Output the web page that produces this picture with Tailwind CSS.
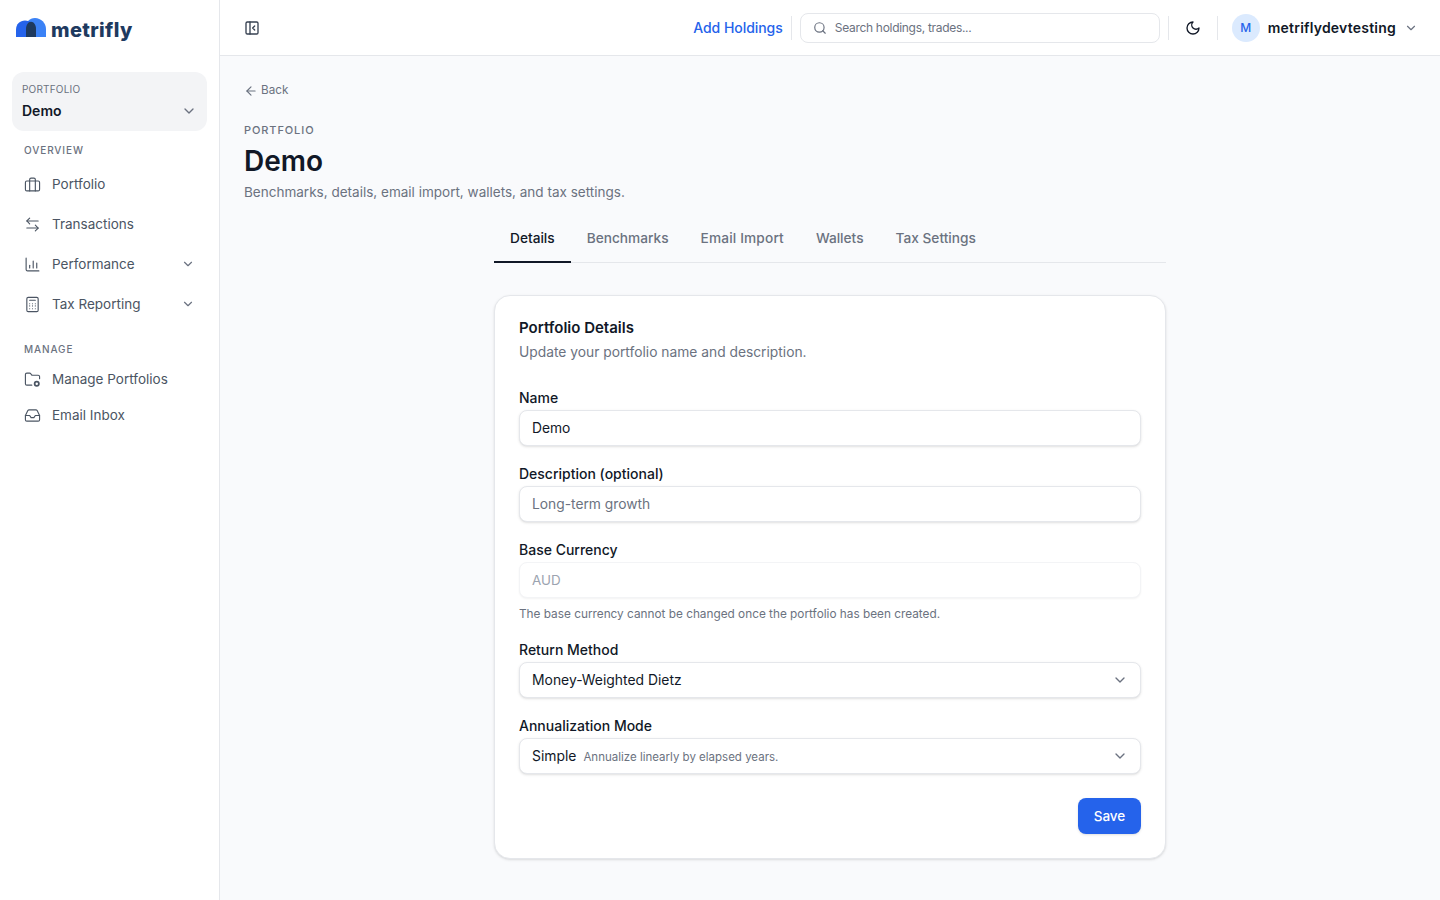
<!DOCTYPE html>
<html lang="en">
  <head>
    <meta charset="UTF-8" />
    <meta name="viewport" content="width=device-width, initial-scale=1.0" />
    <title>Demo - Portfolio</title>
    <script src="https://cdn.jsdelivr.net/npm/@tailwindcss/browser@4"></script>
  </head>
  <body class="bg-white font-['Inter',sans-serif] text-[#111827] overflow-hidden">
    <div class="flex h-[900px] w-[1440px]">
      <!-- Sidebar -->
      <aside class="w-[220px] shrink-0 border-r border-[#e5e7eb] bg-white">
        <div class="flex h-[56px] items-center pl-4">
          <svg width="30" height="20" viewBox="0 0 30 20" class="mb-[1px]">
            <path d="M12 3C14 1 16 0 19 0C25 0 30 5 30 11V19H14Z" fill="#3b82f6" />
            <path d="M0 19V12C0 6 4 2.500 9 2.500C14 2.500 20 6 20 12V19Z" fill="#2563eb" />
            <path d="M10 19V11C10 7 12 3.700 15 3.700C18 3.700 20 7 20 11V19Z" fill="#1e3a5f" />
          </svg>
          <span class="ml-[5px] pt-[3px] text-[20px] leading-none font-extrabold tracking-[0.35px] text-[#1e3a5f]">metrifly</span>
        </div>

        <div class="px-3 pt-4">
          <div class="flex h-[59px] items-end justify-between rounded-xl bg-[#f3f4f6] pb-[10px] pl-[10px] pr-[10px]">
            <div>
              <div class="text-[10px] leading-[14px] tracking-[0.2px] text-[#6b7280]">PORTFOLIO</div>
              <div class="mt-[5px] text-[14px] leading-[20px] font-semibold">Demo</div>
            </div>
            <svg class="mb-[2px] h-4 w-4 text-[#6b7280]" viewBox="0 0 24 24" fill="none" stroke="currentColor" stroke-width="2" stroke-linecap="round" stroke-linejoin="round"><path d="m6 9 6 6 6-6" /></svg>
          </div>
        </div>

        <nav class="px-3 pt-3">
          <div class="px-3 text-[10px] leading-[14px] font-medium tracking-[0.9px] text-[#6b7280]">OVERVIEW</div>
          <div class="mt-[7px]">
            <a class="flex h-[40px] items-center gap-[11px] px-3 text-[13.5px] text-[#4b5563]">
              <svg class="h-[17px] w-[17px]" viewBox="0 0 24 24" fill="none" stroke="currentColor" stroke-width="1.600" stroke-linecap="round" stroke-linejoin="round"><rect x="2" y="7" width="20" height="14" rx="2" /><path d="M16 21V5a2 2 0 0 0-2-2h-4a2 2 0 0 0-2 2v16" /></svg>
              Portfolio
            </a>
            <a class="flex h-[40px] items-center gap-[11px] px-3 text-[13.5px] text-[#4b5563]">
              <svg class="h-[17px] w-[17px]" viewBox="0 0 24 24" fill="none" stroke="currentColor" stroke-width="1.600" stroke-linecap="round" stroke-linejoin="round"><path d="M8 3 4 7l4 4" /><path d="M4 7h16" /><path d="m16 21 4-4-4-4" /><path d="M20 17H4" /></svg>
              Transactions
            </a>
            <a class="flex h-[40px] items-center gap-[11px] px-3 text-[13.5px] text-[#4b5563]">
              <svg class="h-[17px] w-[17px]" viewBox="0 0 24 24" fill="none" stroke="currentColor" stroke-width="1.600" stroke-linecap="round" stroke-linejoin="round"><path d="M3 3v16a2 2 0 0 0 2 2h16" /><path d="M8 17v-4" /><path d="M13 17V7" /><path d="M18 17v-7" /></svg>
              Performance
              <svg class="ml-auto h-[14px] w-[14px] text-[#6b7280]" viewBox="0 0 24 24" fill="none" stroke="currentColor" stroke-width="2" stroke-linecap="round" stroke-linejoin="round"><path d="m6 9 6 6 6-6" /></svg>
            </a>
            <a class="flex h-[40px] items-center gap-[11px] px-3 text-[13.5px] text-[#4b5563]">
              <svg class="h-[17px] w-[17px]" viewBox="0 0 24 24" fill="none" stroke="currentColor" stroke-width="1.600" stroke-linecap="round" stroke-linejoin="round"><rect x="4" y="2" width="16" height="20" rx="2" /><path d="M8 6h8" /><path d="M8 11h.01M12 11h.01M16 11h.01M8 14h.01M12 14h.01M16 14h.01M8 18h.01M12 18h.01M16 18h.01" /></svg>
              Tax Reporting
              <svg class="ml-auto h-[14px] w-[14px] text-[#6b7280]" viewBox="0 0 24 24" fill="none" stroke="currentColor" stroke-width="2" stroke-linecap="round" stroke-linejoin="round"><path d="m6 9 6 6 6-6" /></svg>
            </a>
          </div>

          <div class="mt-[18px] px-3 text-[10px] leading-[14px] font-medium tracking-[0.9px] text-[#6b7280]">MANAGE</div>
          <div class="mt-[5px]">
            <a class="flex h-[36px] items-center gap-[11px] px-3 text-[13.5px] text-[#4b5563]">
              <svg class="h-[17px] w-[17px]" viewBox="0 0 24 24" fill="none" stroke="currentColor" stroke-width="1.600" stroke-linecap="round" stroke-linejoin="round"><path d="M11 20H4a2 2 0 0 1-2-2V5a2 2 0 0 1 2-2h3.900a2 2 0 0 1 1.690.9l.81 1.200a2 2 0 0 0 1.670.9H20a2 2 0 0 1 2 2v3" /><circle cx="18" cy="18" r="3" stroke-width="2.500" /></svg>
              Manage Portfolios
            </a>
            <a class="flex h-[36px] items-center gap-[11px] px-3 text-[13.5px] text-[#4b5563]">
              <svg class="h-[17px] w-[17px]" viewBox="0 0 24 24" fill="none" stroke="currentColor" stroke-width="1.600" stroke-linecap="round" stroke-linejoin="round"><path d="M22 12h-6l-2 3h-4l-2-3H2" /><path d="M5.450 5.110 2 12v6a2 2 0 0 0 2 2h16a2 2 0 0 0 2-2v-6l-3.450-6.890A2 2 0 0 0 16.760 4H7.240a2 2 0 0 0-1.790 1.110z" /></svg>
              Email Inbox
            </a>
          </div>
        </nav>
      </aside>

      <div class="flex min-w-0 flex-1 flex-col">
        <!-- Header -->
        <header class="flex h-[56px] shrink-0 items-center border-b border-[#e5e7eb] bg-white pl-6 pr-[22px]">
          <svg class="h-4 w-4 text-[#374151]" viewBox="0 0 24 24" fill="none" stroke="currentColor" stroke-width="2" stroke-linecap="round" stroke-linejoin="round"><rect x="3" y="3" width="18" height="18" rx="2" /><path d="M9 3v18" /><path d="m16 15-3-3 3-3" /></svg>
          <a class="ml-auto text-[14px] font-medium tracking-[-0.05px] text-[#2563eb]">Add Holdings</a>
          <div class="ml-2 h-6 w-px bg-[#e5e7eb]"></div>
          <div class="ml-2 flex h-[30px] w-[360px] items-center gap-2 rounded-lg border border-[#e5e7eb] bg-white pl-3">
            <svg class="h-[14px] w-[14px] text-[#6b7280]" viewBox="0 0 24 24" fill="none" stroke="currentColor" stroke-width="2" stroke-linecap="round" stroke-linejoin="round"><circle cx="11" cy="11" r="8" /><path d="m21 21-4.300-4.300" /></svg>
            <span class="text-[12px] tracking-[-0.3px] text-[#6b7280]">Search holdings, trades...</span>
          </div>
          <div class="ml-2 h-6 w-px bg-[#e5e7eb]"></div>
          <svg class="ml-4 h-4 w-4 text-[#111827]" viewBox="0 0 24 24" fill="none" stroke="currentColor" stroke-width="2" stroke-linecap="round" stroke-linejoin="round"><path d="M12 3a6 6 0 0 0 9 9 9 9 0 1 1-9-9Z" /></svg>
          <div class="ml-4 h-6 w-px bg-[#e5e7eb]"></div>
          <div class="ml-[14px] flex h-7 w-7 items-center justify-center rounded-full bg-[#dbeafe] text-[12px] font-medium text-[#2563eb]">M</div>
          <span class="ml-2 text-[14px] font-semibold tracking-[0.22px]">metriflydevtesting</span>
          <svg class="ml-2 h-[14px] w-[14px] text-[#6b7280]" viewBox="0 0 24 24" fill="none" stroke="currentColor" stroke-width="2" stroke-linecap="round" stroke-linejoin="round"><path d="m6 9 6 6 6-6" /></svg>
        </header>

        <!-- Main -->
        <main class="min-h-0 flex-1 bg-[#f9fafc] px-6 pt-[25px]">
          <a class="flex h-[20px] items-center gap-[3px] text-[11.7px] text-[#6b7280]">
            <svg class="h-[14px] w-[14px]" viewBox="0 0 24 24" fill="none" stroke="currentColor" stroke-width="2" stroke-linecap="round" stroke-linejoin="round"><path d="m12 19-7-7 7-7" /><path d="M19 12H5" /></svg>
            Back
          </a>
          <div class="mt-[21px] text-[11px] leading-[16px] font-medium tracking-[0.9px] text-[#6b7280]">PORTFOLIO</div>
          <h1 class="mt-[5px] text-[28px] leading-[36px] font-semibold">Demo</h1>
          <p class="mt-[3px] text-[13.53px] leading-[20px] text-[#6b7280]">Benchmarks, details, email import, wallets, and tax settings.</p>

          <div class="mx-auto mt-[13px] w-[672px]">
            <!-- Tabs -->
            <div class="flex h-[48px] border-b border-[#e5e7eb] text-[13.7px] font-medium text-[#6b7280]">
              <a class="-mb-px flex items-center border-b-2 border-[#111827] px-4 pt-[1px] text-[#111827]">Details</a>
              <a class="flex items-center px-4">Benchmarks</a>
              <a class="flex items-center px-4 tracking-[0.15px]">Email Import</a>
              <a class="flex items-center px-4">Wallets</a>
              <a class="flex items-center px-4">Tax Settings</a>
            </div>

            <!-- Card -->
            <form class="mt-8 rounded-2xl border border-[#e5e7eb] bg-white px-6 pb-6 pt-[22px] shadow-sm">
              <h2 class="text-[15px] leading-[20px] font-semibold">Portfolio Details</h2>
              <p class="mt-[4px] text-[13.8px] leading-[20px] text-[#6b7280]">Update your portfolio name and description.</p>

              <label class="mt-[26px] block text-[14px] leading-[20px] font-medium">Name</label>
              <div class="mt-[2px] flex h-[36px] items-center rounded-lg border border-[#e5e7eb] bg-white px-3 text-[13.8px] shadow-sm">Demo</div>

              <label class="mt-[18px] block text-[14px] leading-[20px] font-medium">Description (optional)</label>
              <div class="mt-[2px] flex h-[36px] items-center rounded-lg border border-[#e5e7eb] bg-white px-3 text-[13.8px] text-[#6b7280] shadow-sm">Long-term growth</div>

              <label class="mt-[18px] block text-[14px] leading-[20px] font-medium">Base Currency</label>
              <div class="mt-[2px] flex h-[36px] items-center rounded-lg border border-[#f3f4f6] bg-white px-3 text-[13.4px] text-[#9ca3af] shadow-xs">AUD</div>
              <p class="mt-2 text-[11.8px] leading-[16px] text-[#6b7280]">The base currency cannot be changed once the portfolio has been created.</p>

              <label class="mt-[18px] block text-[14px] leading-[20px] font-medium">Return Method</label>
              <div class="mt-[2px] flex h-[36px] items-center justify-between rounded-lg border border-[#e5e7eb] bg-white px-3 text-[13.9px] shadow-sm">
                Money-Weighted Dietz
                <svg class="h-4 w-4 text-[#6b7280]" viewBox="0 0 24 24" fill="none" stroke="currentColor" stroke-width="2" stroke-linecap="round" stroke-linejoin="round"><path d="m6 9 6 6 6-6" /></svg>
              </div>

              <label class="mt-[18px] block text-[14px] leading-[20px] font-medium">Annualization Mode</label>
              <div class="mt-[2px] flex h-[36px] items-center rounded-lg border border-[#e5e7eb] bg-white px-3 text-[13.9px] shadow-sm">
                Simple
                <span class="ml-[7px] mt-[3px] text-[11.5px] text-[#6b7280]">Annualize linearly by elapsed years.</span>
                <svg class="ml-auto h-4 w-4 text-[#6b7280]" viewBox="0 0 24 24" fill="none" stroke="currentColor" stroke-width="2" stroke-linecap="round" stroke-linejoin="round"><path d="m6 9 6 6 6-6" /></svg>
              </div>

              <div class="mt-6 flex justify-end">
                <button type="button" class="h-[36px] w-[63px] rounded-lg bg-[#2563eb] text-[13.5px] font-medium text-white shadow-sm">Save</button>
              </div>
            </form>
          </div>
        </main>
      </div>
    </div>
  </body>
</html>
